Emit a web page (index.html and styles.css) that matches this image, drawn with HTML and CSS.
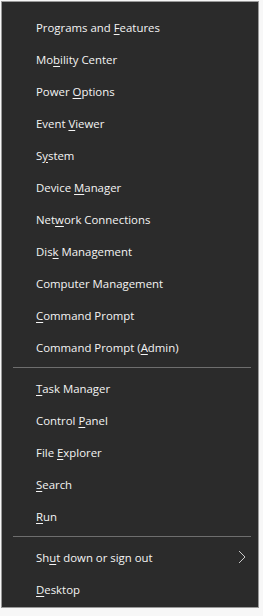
FILE: index.html
```html
<!DOCTYPE html>
<html lang="en">
<head>
    <meta charset="UTF-8">
    <title>Quick Link Menu</title>
    <link rel="stylesheet" href="styles.css">
</head>
<body>
    <div class="menu">
        <ul class="group">
            <li><span>Programs and <u>F</u>eatures</span></li>
            <li><span>Mo<u>b</u>ility Center</span></li>
            <li><span>Power <u>O</u>ptions</span></li>
            <li><span>Event <u>V</u>iewer</span></li>
            <li><span>S<u>y</u>stem</span></li>
            <li><span>Device <u>M</u>anager</span></li>
            <li><span>Net<u>w</u>ork Connections</span></li>
            <li><span>Dis<u>k</u> Management</span></li>
            <li><span>Computer Mana<u>g</u>ement</span></li>
            <li><span><u>C</u>ommand Prompt</span></li>
            <li><span>Command Prompt (<u>A</u>dmin)</span></li>
        </ul>
        <hr class="sep">
        <ul class="group">
            <li><span><u>T</u>ask Manager</span></li>
            <li><span>Control <u>P</u>anel</span></li>
            <li><span>File <u>E</u>xplorer</span></li>
            <li><span><u>S</u>earch</span></li>
            <li><span><u>R</u>un</span></li>
        </ul>
        <hr class="sep">
        <ul class="group">
            <li class="has-sub">
                <span>Sh<u>u</u>t down or sign out</span>
                <svg class="chevron" width="8" height="14" viewBox="0 0 8 14">
                    <path d="M1 1 L7 7 L1 13" fill="none" stroke="#c8c8c8" stroke-width="1"/>
                </svg>
            </li>
            <li><span><u>D</u>esktop</span></li>
        </ul>
    </div>
</body>
</html>
```

FILE: styles.css
```css
* {
    margin: 0;
    padding: 0;
    box-sizing: border-box;
}
body {
    background-color: #f7f7f7;
    font-family: 'Open Sans', 'Noto Sans', sans-serif;
}
.menu {
    width: 258px;
    height: 607px;
    margin: 1px 0 0 1px;
    background-color: #2b2b2b;
    border: 1px solid #9a9a9a;
    padding-top: 9px;
}
.group {
    list-style: none;
}
.group li {
    height: 32px;
    display: flex;
    align-items: center;
    padding-left: 34px;
    padding-right: 12px;
    color: #f4f4f4;
    font-size: 11.4px;
}
.group u {
    text-underline-offset: 2px;
}
.has-sub {
    justify-content: space-between;
}
.chevron {
    display: block;
}
.sep {
    border: none;
    border-top: 1px solid #6e6e6e;
    margin: 4px 7px 4px 11px;
}
```
